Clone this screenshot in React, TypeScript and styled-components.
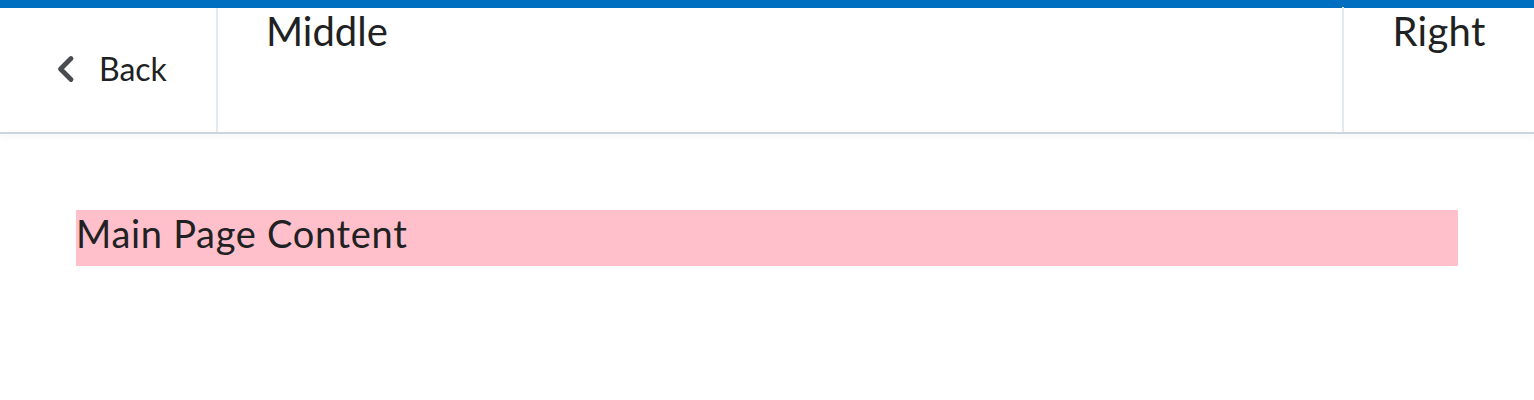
import React from 'react';
import styled, { createGlobalStyle } from 'styled-components';

const GlobalStyle = createGlobalStyle`
  html, body {
    margin: 0;
    padding: 0;
    background: #ffffff;
    font-family: Lato, "Noto Sans", sans-serif;
    color: #202122;
  }
`;

/**
 * Immersive navigation bar across the top of the page
 */
const NavBar = styled.header`
  display: flex;
  height: 124px;
  border-top: 8px solid #006fbf;
  border-bottom: 2px solid #cdd5dc;
  box-shadow: 0 2px 8px rgba(32, 33, 34, 0.05);
  background: #ffffff;
`;

const NavLeft = styled.div`
  display: flex;
  align-items: center;
  width: 218px;
  padding-left: 57px;
  box-sizing: border-box;
  border-right: 2px solid #e3e9f1;
  flex-shrink: 0;
`;

const BackLink = styled.a`
  display: flex;
  align-items: center;
  gap: 24px;
  margin-top: -3px;
  color: #202122;
  text-decoration: none;
  font-size: 32px;
  cursor: pointer;
`;

const Chevron = styled.svg`
  width: 18px;
  height: 28px;
  color: #494c4e;
`;

const NavMiddle = styled.div`
  flex: 1;
  padding-left: 48px;
  font-size: 40px;
  margin-top: -1px;
`;

const NavRight = styled.div`
  width: 190px;
  flex-shrink: 0;
  border-left: 2px solid #e3e9f1;
  text-align: center;
  font-size: 40px;
  letter-spacing: 0.3px;
  margin-top: -1px;
`;

const Main = styled.main`
  padding: 76px 76px;
`;

const PageContent = styled.div`
  min-height: 56px;
  box-sizing: border-box;
  background: pink;
  font-size: 38px;
  letter-spacing: 0.7px;
`;

export default function App() {
    return (
        <>
            <GlobalStyle />
            <NavBar>
                <NavLeft>
                    <BackLink>
                        <Chevron viewBox="0 0 18 28" fill="none">
                            <path d="M14 3.5 L3.5 14 L14 24.5" stroke="currentColor" strokeWidth="4.8" strokeLinecap="round" strokeLinejoin="round" />
                        </Chevron>
                        <span>Back</span>
                    </BackLink>
                </NavLeft>
                <NavMiddle>Middle</NavMiddle>
                <NavRight>Right</NavRight>
            </NavBar>
            <Main>
                <PageContent>Main Page Content</PageContent>
            </Main>
        </>
    );
}
